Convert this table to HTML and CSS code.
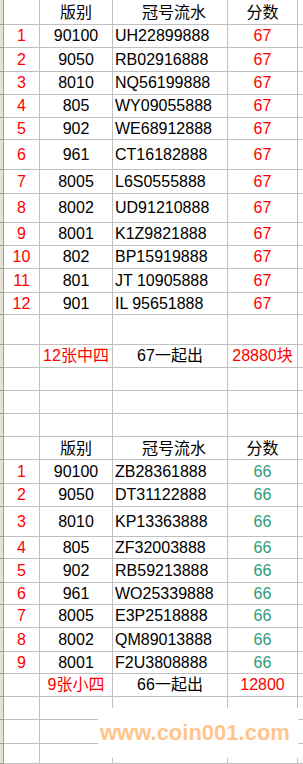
FILE: index.html
```html
<!DOCTYPE html>
<html lang="zh">
<head>
<meta charset="utf-8">
<link rel="stylesheet" href="styles.css">
</head>
<body>
<div class="sheet">
  <div class="row h25"><div class="c s"></div><div class="c"></div><div class="c cj">版别</div><div class="c cj hd">冠号流水</div><div class="c cj">分数</div><div class="c e"></div></div>

  <div class="row h23"><div class="c s"></div><div class="c red">1</div><div class="c">90100</div><div class="c l">UH22899888</div><div class="c red">67</div><div class="c e"></div></div>
  <div class="row h24"><div class="c s"></div><div class="c red">2</div><div class="c">9050</div><div class="c l">RB02916888</div><div class="c red">67</div><div class="c e"></div></div>
  <div class="row h23"><div class="c s"></div><div class="c red">3</div><div class="c">8010</div><div class="c l">NQ56199888</div><div class="c red">67</div><div class="c e"></div></div>
  <div class="row h23"><div class="c s"></div><div class="c red">4</div><div class="c">805</div><div class="c l">WY09055888</div><div class="c red">67</div><div class="c e"></div></div>
  <div class="row h22"><div class="c s"></div><div class="c red">5</div><div class="c">902</div><div class="c l">WE68912888</div><div class="c red">67</div><div class="c e"></div></div>
  <div class="row h30"><div class="c s"></div><div class="c red">6</div><div class="c">961</div><div class="c l">CT16182888</div><div class="c red">67</div><div class="c e"></div></div>
  <div class="row h24"><div class="c s"></div><div class="c red">7</div><div class="c">8005</div><div class="c l">L6S0555888</div><div class="c red">67</div><div class="c e"></div></div>
  <div class="row h29"><div class="c s"></div><div class="c red">8</div><div class="c">8002</div><div class="c l">UD91210888</div><div class="c red">67</div><div class="c e"></div></div>
  <div class="row h23"><div class="c s"></div><div class="c red">9</div><div class="c">8001</div><div class="c l">K1Z9821888</div><div class="c red">67</div><div class="c e"></div></div>
  <div class="row h23"><div class="c s"></div><div class="c red">10</div><div class="c">802</div><div class="c l">BP15919888</div><div class="c red">67</div><div class="c e"></div></div>
  <div class="row h24"><div class="c s"></div><div class="c red">11</div><div class="c">801</div><div class="c l">JT 10905888</div><div class="c red">67</div><div class="c e"></div></div>
  <div class="row h22"><div class="c s"></div><div class="c red">12</div><div class="c">901</div><div class="c l">IL 95651888</div><div class="c red">67</div><div class="c e"></div></div>

  <div class="row h30"><div class="c s"></div><div class="c"></div><div class="c"></div><div class="c"></div><div class="c"></div><div class="c e"></div></div>
  <div class="row h23"><div class="c s"></div><div class="c"></div><div class="c red">12张中四</div><div class="c">67一起出</div><div class="c red">28880块</div><div class="c e"></div></div>
  <div class="row h23"><div class="c s"></div><div class="c"></div><div class="c"></div><div class="c"></div><div class="c"></div><div class="c e"></div></div>
  <div class="row h23"><div class="c s"></div><div class="c"></div><div class="c"></div><div class="c"></div><div class="c"></div><div class="c e"></div></div>
  <div class="row h23"><div class="c s"></div><div class="c"></div><div class="c"></div><div class="c"></div><div class="c"></div><div class="c e"></div></div>

  <div class="row h23"><div class="c s"></div><div class="c"></div><div class="c cj">版别</div><div class="c cj hd">冠号流水</div><div class="c cj">分数</div><div class="c e"></div></div>

  <div class="row h24"><div class="c s"></div><div class="c red">1</div><div class="c">90100</div><div class="c l">ZB28361888</div><div class="c grn">66</div><div class="c e"></div></div>
  <div class="row h23"><div class="c s"></div><div class="c red">2</div><div class="c">9050</div><div class="c l">DT31122888</div><div class="c grn">66</div><div class="c e"></div></div>
  <div class="row h30"><div class="c s"></div><div class="c red">3</div><div class="c">8010</div><div class="c l">KP13363888</div><div class="c grn">66</div><div class="c e"></div></div>
  <div class="row h22"><div class="c s"></div><div class="c red">4</div><div class="c">805</div><div class="c l">ZF32003888</div><div class="c grn">66</div><div class="c e"></div></div>
  <div class="row h24"><div class="c s"></div><div class="c red">5</div><div class="c">902</div><div class="c l">RB59213888</div><div class="c grn">66</div><div class="c e"></div></div>
  <div class="row h22"><div class="c s"></div><div class="c red">6</div><div class="c">961</div><div class="c l">WO25339888</div><div class="c grn">66</div><div class="c e"></div></div>
  <div class="row h23"><div class="c s"></div><div class="c red">7</div><div class="c">8005</div><div class="c l">E3P2518888</div><div class="c grn">66</div><div class="c e"></div></div>
  <div class="row h24"><div class="c s"></div><div class="c red">8</div><div class="c">8002</div><div class="c l">QM89013888</div><div class="c grn">66</div><div class="c e"></div></div>
  <div class="row h22"><div class="c s"></div><div class="c red">9</div><div class="c">8001</div><div class="c l">F2U3808888</div><div class="c grn">66</div><div class="c e"></div></div>

  <div class="row h23"><div class="c s"></div><div class="c"></div><div class="c red">9张小四</div><div class="c">66一起出</div><div class="c red">12800</div><div class="c e"></div></div>
  <div class="row h23"><div class="c s"></div><div class="c"></div><div class="c"></div><div class="c"></div><div class="c"></div><div class="c e"></div></div>
  <div class="row h24"><div class="c s"></div><div class="c"></div><div class="c"></div><div class="c"></div><div class="c"></div><div class="c e"></div></div>
  <div class="row h20"><div class="c s"></div><div class="c"></div><div class="c"></div><div class="c"></div><div class="c"></div><div class="c e"></div></div>

  <div class="wm">www.coin001.com</div>
</div>
</body>
</html>
```
FILE: styles.css
```css
html, body {
  margin: 0;
  padding: 0;
  background: #fff;
}
body {
  font-family: "Liberation Sans", "Noto Sans CJK SC", sans-serif;
  font-size: 16px;
  color: #000;
}
.sheet {
  position: relative;
  width: 303px;
  height: 764px;
  overflow: hidden;
}
.row {
  display: grid;
  grid-template-columns: 4px 36px 73px 115px 70px 5px;
}
.h20 { height: 20px; }
.h22 { height: 22px; }
.h23 { height: 23px; }
.h24 { height: 24px; }
.h25 { height: 25px; }
.h29 { height: 29px; }
.h30 { height: 30px; }
.c {
  box-sizing: border-box;
  border-right: 1px solid #c0c0c0;
  border-bottom: 1px solid #c0c0c0;
  display: flex;
  align-items: center;
  justify-content: center;
  white-space: nowrap;
  overflow: hidden;
  line-height: 1;
}
.s {
  background: #e6e2d6;
  border-right-color: #9e9a8e;
  border-bottom-color: #9e9a8e;
}
.e { border-right: none; }
.l {
  justify-content: flex-start;
  padding-left: 2px;
}
.hd { padding-left: 8px; }
.cj { padding-top: 2px; }
.red { color: #ff0000; }
.grn { color: #2e9c78; }
.wm {
  position: absolute;
  left: 98px;
  top: 708px;
  width: 200px;
  height: 50px;
  box-sizing: border-box;
  padding-left: 2px;
  background: #fff;
  display: flex;
  align-items: center;
  font-family: "Liberation Sans", sans-serif;
  font-weight: bold;
  font-size: 22px;
  color: #ffc58c;
}
```
